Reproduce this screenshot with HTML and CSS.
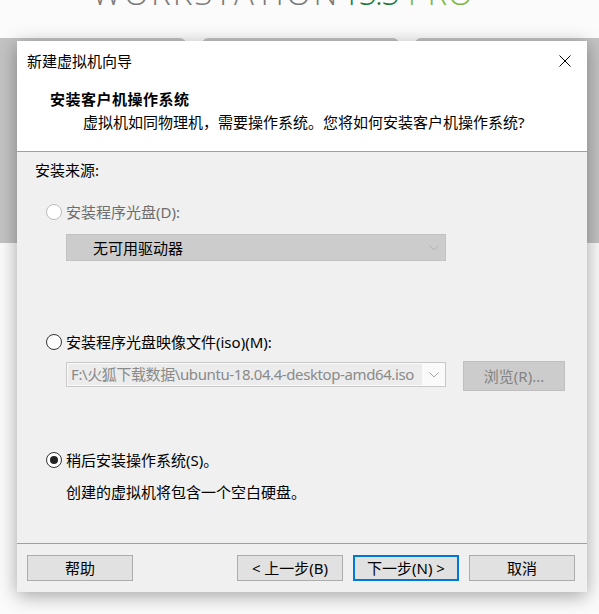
FILE: index.html
```html
<!DOCTYPE html>
<html lang="zh-CN">
<head>
    <meta charset="UTF-8">
    <meta name="viewport" content="width=device-width, initial-scale=1.0">
    <title>新建虚拟机向导</title>
    <link rel="stylesheet" href="styles.css">
</head>
<body>

    <div class="home">
        <div class="brand"><span class="name">WORKSTATION</span><span class="ver">15.5</span><span class="pro">PRO</span></div>
        <div class="tiles">
            <div class="tile"></div>
            <div class="tile"></div>
            <div class="tile"></div>
        </div>
    </div>

    <div class="dialog">
        <div class="titlebar">
            <span>新建虚拟机向导</span>
            <svg class="close" width="12" height="12" viewBox="0 0 12 12">
                <path d="M0.5 0.5L11.5 11.5M11.5 0.5L0.5 11.5" stroke="#000" stroke-width="1" fill="none"/>
            </svg>
        </div>

        <div class="wizard-head">
            <h2>安装客户机操作系统</h2>
            <p>虚拟机如同物理机，需要操作系统。您将如何安装客户机操作系统?</p>
        </div>

        <div class="wizard-body">
            <p class="source">安装来源:</p>

            <label class="radio disabled"><span class="dot"></span>安装程序光盘(D):</label>
            <div class="combo drive">
                <span>无可用驱动器</span>
                <svg class="chevron" width="10" height="6" viewBox="0 0 10 6">
                    <path d="M0.5 0.5L5 5L9.5 0.5" stroke="#b4b4b4" fill="none"/>
                </svg>
            </div>

            <label class="radio"><span class="dot"></span>安装程序光盘映像文件(iso)(M):</label>
            <div class="iso-row">
                <div class="combo iso">
                    <span class="path">F:\火狐下载数据\ubuntu-18.04.4-desktop-amd64.iso</span>
                    <svg class="chevron" width="10" height="6" viewBox="0 0 10 6">
                        <path d="M0.5 0.5L5 5L9.5 0.5" stroke="#a8a8a8" fill="none"/>
                    </svg>
                </div>
                <button class="browse" disabled>浏览(R)...</button>
            </div>

            <label class="radio checked"><span class="dot"></span>稍后安装操作系统(S)。</label>
            <p class="note">创建的虚拟机将包含一个空白硬盘。</p>
        </div>

        <div class="wizard-foot">
            <button>帮助</button>
            <div class="nav">
                <button>&lt; 上一步(B)</button>
                <button class="default">下一步(N) &gt;</button>
                <button>取消</button>
            </div>
        </div>
    </div>

</body>
</html>
```

FILE: styles.css
```css
* {
    box-sizing: border-box;
    margin: 0;
    padding: 0;
}
body {
    width: 599px;
    height: 614px;
    overflow: hidden;
    background-color: #fafafa;
    font-family: "Noto Sans", "Noto Sans CJK SC", sans-serif;
    font-size: 15px;
    line-height: 22px;
    color: #000;
}
.home {
    height: 614px;
    background: #fbfbfb;
}
.brand {
    height: 38px;
    padding-left: 92px;
    font-family: "Open Sans", sans-serif;
    font-weight: 300;
    font-size: 33px;
    line-height: 33px;
    color: #7a7a7a;
    white-space: nowrap;
    overflow: hidden;
    display: flex;
    align-items: flex-start;
}
.brand span {
    margin-top: -24px;
}
.brand .name {
    letter-spacing: 2.2px;
}
.brand .ver {
    color: #1a7a3e;
    letter-spacing: -2px;
    margin-left: 2px;
}
.brand .pro {
    color: #7cb846;
    letter-spacing: 0.5px;
    margin-left: 10px;
}
.tiles {
    display: flex;
    gap: 16px;
    margin-left: -20px;
}
.tile {
    flex-shrink: 0;
    width: 206px;
    height: 205px;
    background: #c3c3c3;
    border-radius: 6px;
}
.tile:nth-child(2) {
    width: 197px;
}
.dialog {
    position: absolute;
    top: 41px;
    left: 17px;
    width: 570px;
    height: 551px;
    background: #f0f0f0;
    display: flex;
    flex-direction: column;
    box-shadow: 0 4px 18px rgba(0, 0, 0, 0.35);
}
.titlebar {
    height: 40px;
    background: #fff;
    display: flex;
    justify-content: space-between;
    align-items: center;
    padding: 0 16px 0 10px;
}
.wizard-head {
    background: #fff;
    padding: 7px 0 18px 33px;
    border-bottom: 1px solid #a0a0a0;
}
.wizard-head h2 {
    font-size: 15px;
    font-weight: bold;
    line-height: 23px;
    letter-spacing: 0.5px;
}
.wizard-head p {
    padding-left: 33px;
}
.wizard-body {
    flex: 1;
    padding: 7px 0 0 18px;
}
.radio {
    display: flex;
    align-items: center;
    gap: 4px;
    margin-left: 11px;
    margin-top: 20px;
}
.radio .dot {
    width: 16px;
    height: 16px;
    border: 1px solid #333;
    border-radius: 50%;
    background: #fff;
    display: flex;
    align-items: center;
    justify-content: center;
}
.radio.disabled {
    color: #6d6d6d;
}
.radio.disabled .dot {
    border-color: #bcbcbc;
}
.radio.checked .dot::after {
    content: "";
    width: 8px;
    height: 8px;
    border-radius: 50%;
    background: #222;
}
.combo {
    display: flex;
    align-items: center;
    justify-content: space-between;
    margin-left: 31px;
    width: 380px;
}
.combo .chevron {
    margin-right: 6px;
}
.drive {
    height: 27px;
    margin-top: 11px;
    background: #cccccc;
    border: 1px solid #c2c2c2;
    padding-left: 26px;
}
.radio:nth-of-type(2) {
    margin-top: 70px;
}
.iso-row {
    display: flex;
    align-items: flex-start;
    gap: 17px;
    margin-top: 8px;
}
.iso {
    height: 25px;
    margin-top: 1px;
    background: #fafafa;
    border: 1px solid #c8c8c8;
    padding-left: 1px;
}
.iso .path {
    width: 354px;
    background: #ececec;
    color: #8a8a8a;
    padding-left: 3px;
    line-height: 21px;
    letter-spacing: -0.4px;
    white-space: nowrap;
    overflow: hidden;
}
.browse {
    width: 102px;
    height: 30px;
    background: #cccccc;
    border: 1px solid #bfbfbf;
    color: #838383;
    font: inherit;
}
.radio.checked {
    margin-top: 58px;
}
.note {
    margin: 10px 0 0 31px;
}
.wizard-foot {
    height: 49px;
    border-top: 1px solid #a0a0a0;
    display: flex;
    justify-content: space-between;
    padding: 11px 12px 0 10px;
}
.nav {
    display: flex;
    gap: 10px;
}
.wizard-foot button {
    width: 106px;
    height: 26px;
    background: #e1e1e1;
    border: 1px solid #adadad;
    font: inherit;
    color: #000;
}
.wizard-foot button.default {
    border: 2px solid #0078d7;
}
```
